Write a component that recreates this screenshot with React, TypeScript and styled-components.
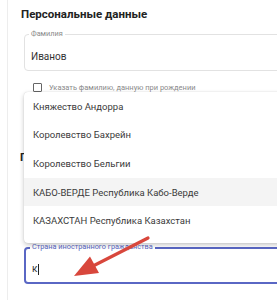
import React from 'react'
import styled, { createGlobalStyle } from 'styled-components'

const ACCENT = '#5a67c4'

const countries = [
    'Княжество Андорра',
    'Королевство Бахрейн',
    'Королевство Бельгии',
    'КАБО-ВЕРДЕ Республика Кабо-Верде',
    'КАЗАХСТАН Республика Казахстан',
]

const GlobalStyle = createGlobalStyle`
    html, body {
        margin: 0;
        padding: 0;
        background: #ffffff;
        overflow: hidden;
    }

    body {
        font-family: Roboto, 'Liberation Sans', Arial, sans-serif;
    }
`

export default function App() {
    return (
        <>
            <GlobalStyle />
            <Page>
                <Card>
                    <Title>Персональные данные</Title>
                    <Field>
                        <FieldLabel>Фамилия</FieldLabel>
                        <FieldValue>Иванов</FieldValue>
                    </Field>
                    <CheckRow>
                        <CheckBox />
                        <CheckLabel>
                            Указать фамилию, данную при рождении
                        </CheckLabel>
                    </CheckRow>
                    {/* fields below sit under the open dropdown */}
                    <Field top="5px" height="34px" />
                    <SubTitle>Г</SubTitle>
                    <Field top="14px" />
                    <Field top="31px" focused>
                        <FieldLabel focused>
                            Страна иностранного гражданства
                        </FieldLabel>
                        <FieldValue>
                            к<Caret />
                        </FieldValue>
                    </Field>
                </Card>

                <Dropdown>
                    {countries.map((name, i) => (
                        <Option key={name} active={i === 3}>
                            {name}
                        </Option>
                    ))}
                </Dropdown>

                <Arrow width="277" height="300" viewBox="0 0 277 300">
                    <line
                        x1="148"
                        y1="238"
                        x2="94"
                        y2="265.5"
                        stroke="#d8473c"
                        strokeWidth="3.2"
                        strokeLinecap="round"
                    />
                    <polygon
                        points="74,276 99,273 90,256.5"
                        fill="#d8473c"
                    />
                </Arrow>
            </Page>
        </>
    )
}

const Page = styled.div`
    position: relative;
    width: 277px;
    height: 300px;
    overflow: hidden;
`

const Card = styled.div`
    margin-left: 7px;
    width: 420px;
    height: 320px;
    border-left: 1px solid #ededed;
    padding: 6px 0 0 13px;
    display: flex;
    flex-direction: column;
    box-sizing: border-box;
`

const Title = styled.div`
    font-size: 11.5px;
    line-height: 16px;
    font-weight: 700;
    color: #222;
`

const SubTitle = styled(Title)`
    margin: 15px 0 0 -1px;
`

const Field = styled.div<{ top?: string; height?: string; focused?: boolean }>`
    position: relative;
    margin: ${(p) => p.top || '12px'} 0 0 3px;
    height: ${(p) => p.height || '37px'};
    box-sizing: border-box;
    border: ${(p) => (p.focused ? `2px solid ${ACCENT}` : '1px solid #e2e2e2')};
    border-radius: 4px;
    padding: ${(p) => (p.focused ? '12px 6px 0 6px' : '14px 6px 0 6px')};
`

const FieldLabel = styled.span<{ focused?: boolean }>`
    position: absolute;
    left: 4px;
    top: ${(p) => (p.focused ? '-7px' : '-6px')};
    padding: 0 2px;
    background: #fff;
    font-size: 7.3px;
    line-height: 10px;
    color: ${(p) => (p.focused ? ACCENT : '#8a8a8a')};
`

const FieldValue = styled.div`
    display: flex;
    align-items: center;
    font-size: 10px;
    line-height: 16px;
    color: #333;
`

const Caret = styled.span`
    display: inline-block;
    width: 1px;
    height: 11px;
    margin-left: 1px;
    background: #222;
`

const CheckRow = styled.div`
    display: flex;
    align-items: center;
    gap: 7px;
    height: 16px;
    margin: 8px 0 0 12px;
`

const CheckBox = styled.span`
    width: 9px;
    height: 9px;
    border: 1.3px solid #666;
    border-radius: 1px;
    box-sizing: border-box;
`

const CheckLabel = styled.span`
    font-size: 7.5px;
    color: #8a8a8a;
`

const Dropdown = styled.div`
    position: absolute;
    left: 24px;
    top: 92px;
    width: 300px;
    padding-bottom: 8px;
    background: #fff;
    border-radius: 4px;
    box-shadow: 0 2px 5px rgba(0, 0, 0, 0.22), 0 0 1px rgba(0, 0, 0, 0.2);
`

const Option = styled.div<{ active?: boolean }>`
    height: 28.6px;
    display: flex;
    align-items: center;
    padding-left: 9px;
    font-size: 9.5px;
    color: #3a3a3a;
    background: ${(p) => (p.active ? '#f4f4f4' : 'transparent')};
`

const Arrow = styled.svg`
    position: absolute;
    left: 0;
    top: 0;
    pointer-events: none;
`
